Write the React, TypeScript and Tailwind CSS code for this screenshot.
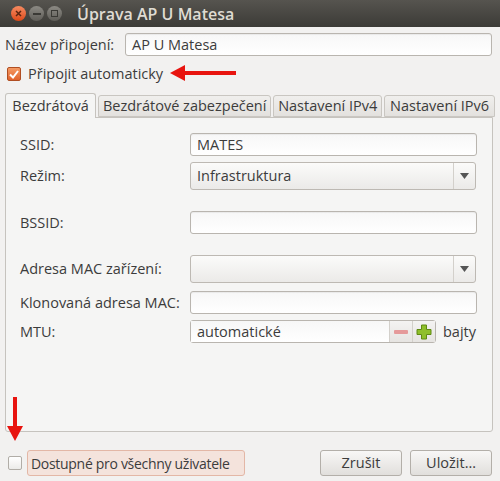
import React from 'react';

const font = { fontFamily: '"Open Sans", "DejaVu Sans", sans-serif' };

const Input: React.FC<{ value?: string; className?: string }> = ({ value, className = '' }) => (
  <div
    className={`h-[23px] rounded-[3px] border border-[#b9b5af] bg-gradient-to-b from-[#f7f7f7] to-white shadow-[inset_0_1px_1px_rgba(0,0,0,0.06)] flex items-center px-[6px] text-[14.5px] text-[#3c3c3c] ${className}`}
  >
    {value}
  </div>
);

const Combo: React.FC<{ value?: string }> = ({ value }) => (
  <div className="h-[28px] w-[286px] rounded-[3px] border border-[#bdb9b3] bg-gradient-to-b from-[#fbfbfa] to-[#ebeae8] flex items-stretch text-[14.5px] text-[#3c3c3c]">
    <div className="flex-1 flex items-center px-[6px]">{value}</div>
    <div className="w-[22px] border-l border-[#d3d0cb] flex items-center justify-center">
      <svg width="9" height="6" viewBox="0 0 9 6">
        <path d="M0 0 L9 0 L4.5 6 Z" fill="#555" />
      </svg>
    </div>
  </div>
);

const Label: React.FC<{ children: React.ReactNode }> = ({ children }) => (
  <div className="w-[170px] text-[14.5px] text-[#3c3c3c]">{children}</div>
);

export default function App() {
  return (
    <div style={font} className="relative w-[500px] h-[481px] bg-[#f2f1f0] overflow-hidden text-[#3c3c3c]">
      {/* title bar */}
      <div className="h-[27px] bg-gradient-to-b from-[#56544f] to-[#3c3b37] flex items-center pl-[11px]">
        <div className="flex items-center gap-[3px]">
          <div className="w-[15px] h-[15px] rounded-full bg-gradient-to-b from-[#f58a5f] to-[#dd4814] flex items-center justify-center">
            <svg width="7" height="7" viewBox="0 0 7 7">
              <path d="M1 1 L6 6 M6 1 L1 6" stroke="#5a2510" strokeWidth="1.5" />
            </svg>
          </div>
          <div className="w-[15px] h-[15px] rounded-full bg-gradient-to-b from-[#8c8a84] to-[#5f5d58] flex items-center justify-center">
            <div className="w-[8px] h-[2px] bg-[#3a3935]" />
          </div>
          <div className="w-[15px] h-[15px] rounded-full bg-gradient-to-b from-[#8c8a84] to-[#5f5d58] flex items-center justify-center">
            <div className="w-[7px] h-[7px] border-[1.5px] border-[#3a3935]" />
          </div>
        </div>
        <div className="ml-[15px] text-[#dfdbd2] text-[16px] font-semibold">Úprava AP U Matesa</div>
      </div>

      <div className="px-[5px]">
        {/* connection name */}
        <div className="mt-[6px] flex items-center">
          <div className="w-[120px] text-[14.5px]">Název připojení:</div>
          <Input value="AP U Matesa" className="w-[367px]" />
        </div>

        {/* auto connect */}
        <div className="mt-[10px] flex items-center h-[16px]">
          <div className="ml-[2px] w-[14px] h-[14px] rounded-[2px] border border-[#b04e22] bg-gradient-to-b from-[#f49a63] to-[#e0622c] flex items-center justify-center">
            <svg width="10" height="9" viewBox="0 0 10 9">
              <path d="M1 4.5 L4 7.5 L9 1" stroke="white" strokeWidth="2" fill="none" />
            </svg>
          </div>
          <div className="ml-[7px] text-[14.5px]">Připojit automaticky</div>
        </div>

        {/* tabs */}
        <div className="mt-[10px] flex items-end h-[25px]">
          <div className="h-[25px] w-[92px] border border-b-0 border-[#c6c3be] rounded-t-[3px] bg-[#f5f5f4] flex items-center justify-center text-[14.5px] relative z-10 -mb-px">
            Bezdrátová
          </div>
          <div className="ml-[2px] h-[22px] w-[175px] border border-[#c9c6c1] rounded-t-[3px] bg-gradient-to-b from-[#f0efed] to-[#e3e1de] flex items-center justify-center text-[14.5px]">
            Bezdrátové zabezpečení
          </div>
          <div className="ml-[2px] h-[22px] w-[110px] border border-[#c9c6c1] rounded-t-[3px] bg-gradient-to-b from-[#f0efed] to-[#e3e1de] flex items-center justify-center text-[14.5px]">
            Nastavení IPv4
          </div>
          <div className="ml-[2px] h-[22px] w-[112px] border border-[#c9c6c1] rounded-t-[3px] bg-gradient-to-b from-[#f0efed] to-[#e3e1de] flex items-center justify-center text-[14.5px] whitespace-nowrap overflow-hidden">
            Nastavení IPv6
          </div>
        </div>

        {/* panel */}
        <div className="w-[488px] h-[315px] border border-[#c6c3be] rounded-b-[3px] bg-[#f5f5f4] pl-[14px] pt-[15px]">
          <div className="flex items-center">
            <Label>SSID:</Label>
            <Input value="MATES" className="w-[287px]" />
          </div>
          <div className="mt-[6px] flex items-center">
            <Label>Režim:</Label>
            <Combo value="Infrastruktura" />
          </div>
          <div className="mt-[21px] flex items-center">
            <Label>BSSID:</Label>
            <Input className="w-[287px]" />
          </div>
          <div className="mt-[21px] flex items-center">
            <Label>Adresa MAC zařízení:</Label>
            <Combo />
          </div>
          <div className="mt-[8px] flex items-center">
            <Label>Klonovaná adresa MAC:</Label>
            <Input className="w-[287px]" />
          </div>
          <div className="mt-[6px] flex items-center">
            <Label>MTU:</Label>
            <div className="h-[23px] w-[246px] rounded-[3px] border border-[#b9b5af] bg-white flex items-stretch text-[14.5px]">
              <div className="flex-1 flex items-center px-[6px] bg-gradient-to-b from-[#f7f7f7] to-white">automatické</div>
              <div className="w-[23px] border-l border-[#d3d0cb] bg-gradient-to-b from-[#f4f3f2] to-[#e6e4e1] flex items-center justify-center">
                <div className="w-[14px] h-[4px] bg-[#e59a9a] rounded-[1px]" />
              </div>
              <div className="w-[23px] border-l border-[#d3d0cb] bg-gradient-to-b from-[#f4f3f2] to-[#e6e4e1] flex items-center justify-center">
                <svg width="16" height="16" viewBox="0 0 16 16">
                  <path d="M5.5 1 H10.5 V5.5 H15 V10.5 H10.5 V15 H5.5 V10.5 H1 V5.5 H5.5 Z" fill="#8fbf2a" stroke="#5f8a12" strokeWidth="1" />
                </svg>
              </div>
            </div>
            <div className="ml-[7px] text-[14.5px]">bajty</div>
          </div>
        </div>

        {/* bottom row */}
        <div className="mt-[18px] flex items-center">
          <div className="ml-[3px] w-[14px] h-[14px] rounded-[2px] border border-[#b1ada7] bg-gradient-to-b from-white to-[#ecebe9]" />
          <div className="ml-[5px] h-[26px] w-[218px] rounded-[3px] border border-[#e3b7a6] bg-[#f4e3dc] flex items-center px-[3px] text-[14px] tracking-[-0.3px] whitespace-nowrap">
            Dostupné pro všechny uživatele
          </div>
          <div className="ml-auto mr-[3px] flex gap-[8px]">
            <div className="h-[26px] w-[82px] rounded-[3px] border border-[#b3afa9] bg-gradient-to-b from-[#f8f7f6] to-[#e1dfdc] flex items-center justify-center text-[14.5px]">
              Zrušit
            </div>
            <div className="h-[26px] w-[82px] rounded-[3px] border border-[#b3afa9] bg-gradient-to-b from-[#f8f7f6] to-[#e1dfdc] flex items-center justify-center text-[14.5px]">
              Uložit…
            </div>
          </div>
        </div>
      </div>

      {/* red annotation arrows */}
      <svg className="absolute left-[168px] top-[63px]" width="70" height="20" viewBox="0 0 70 20">
        <path d="M2 10 L17 2 L17 8 L68 8 L68 12 L17 12 L17 18 Z" fill="#e8140f" />
      </svg>
      <svg className="absolute left-[6px] top-[396px]" width="18" height="46" viewBox="0 0 18 46">
        <path d="M7 1 L11 1 L11 30 L17 30 L9 45 L1 30 L7 30 Z" fill="#e8140f" />
      </svg>
    </div>
  );
}
